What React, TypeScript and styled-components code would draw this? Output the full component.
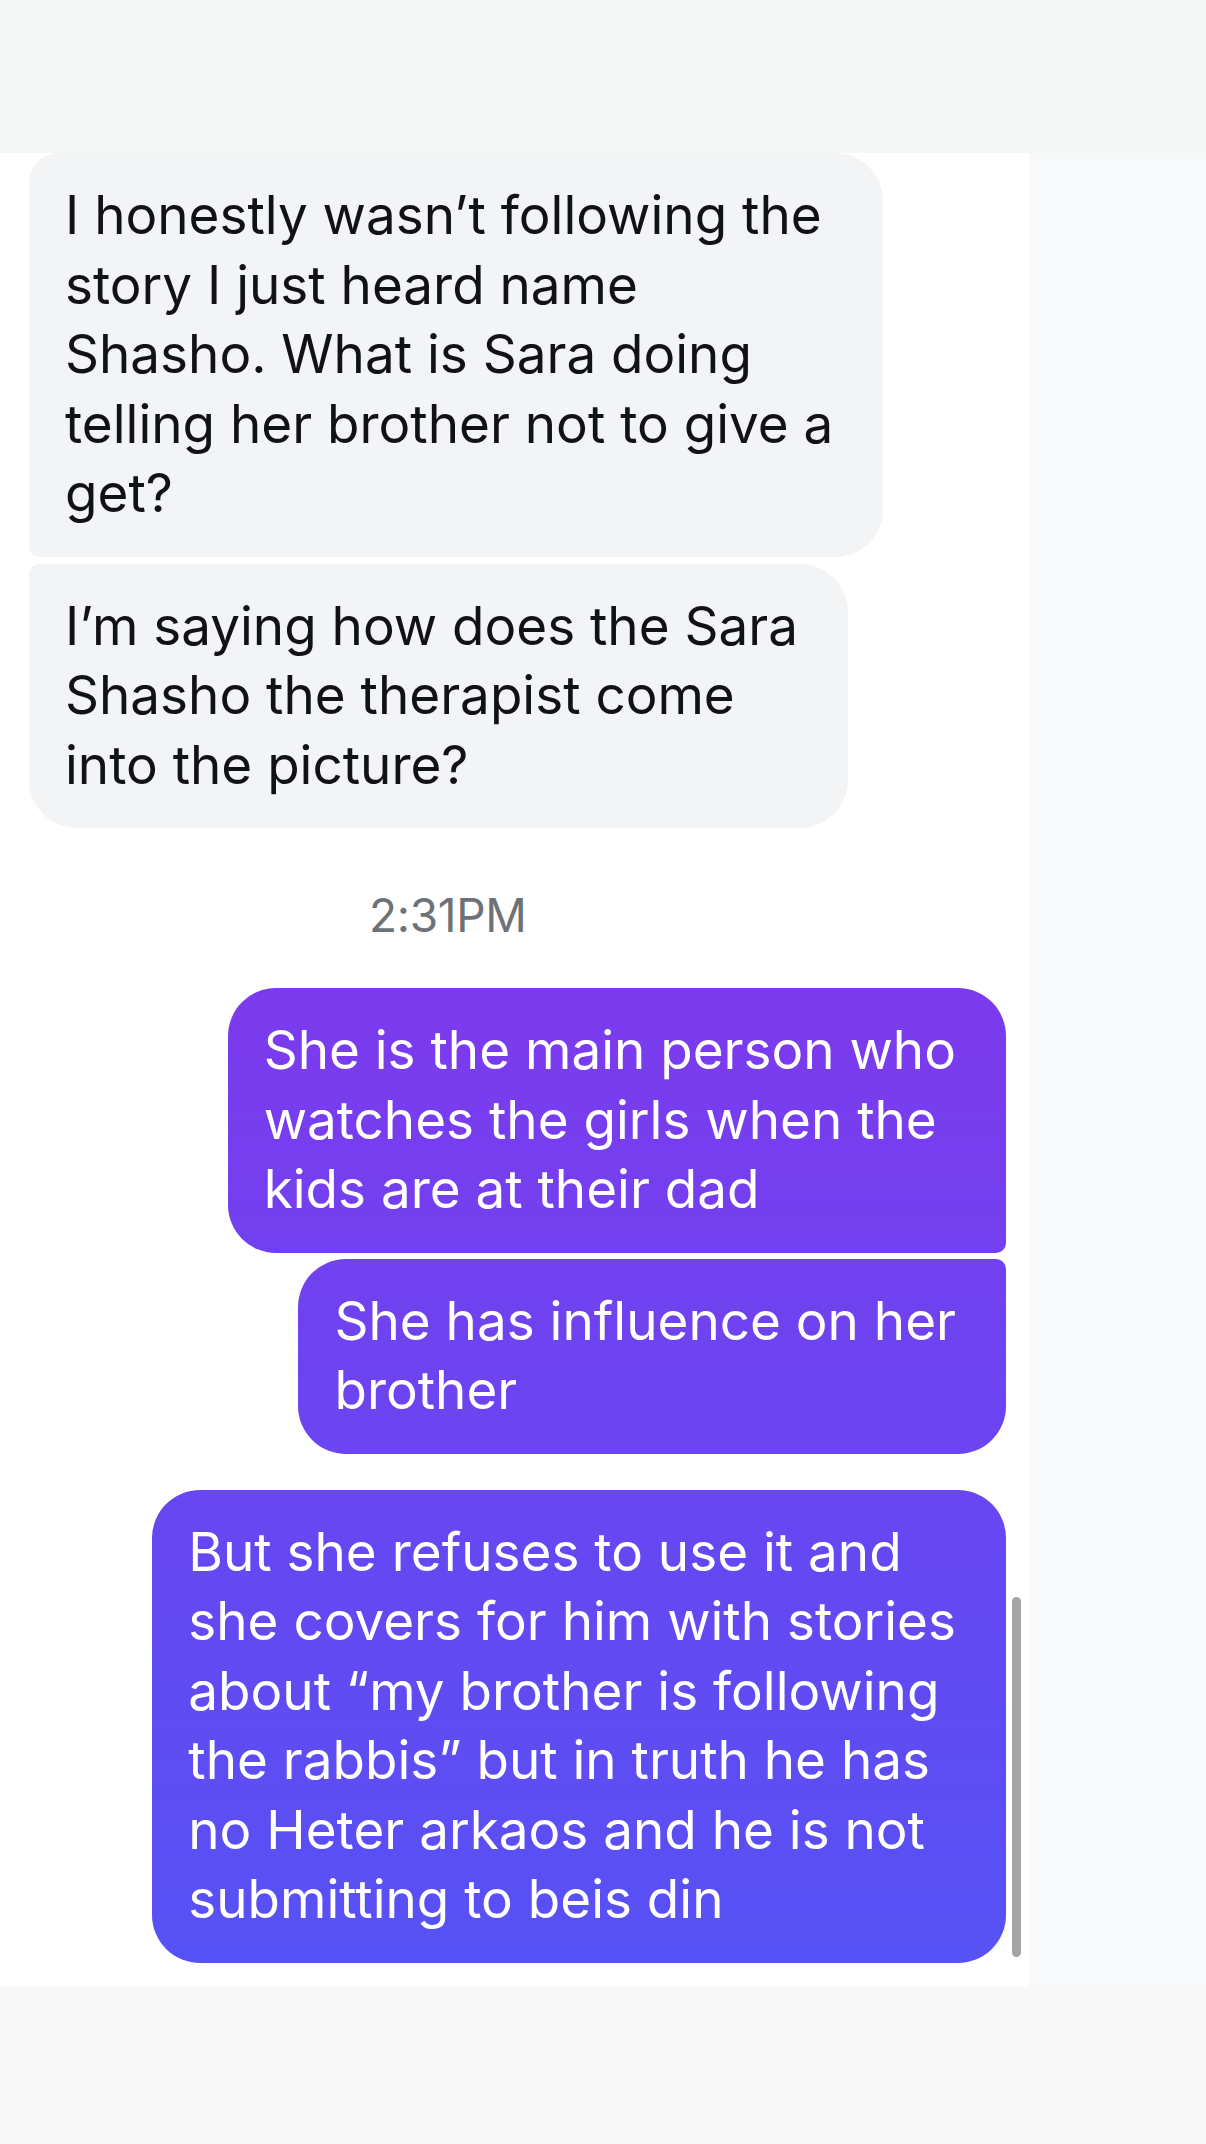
import { createGlobalStyle, styled, css } from "styled-components";

const GlobalStyle = createGlobalStyle`
  html, body {
    margin: 0;
    padding: 0;
  }
  body {
    background: #f7f8f8;
    font-family: Inter, "Liberation Sans", Arial, sans-serif;
    -webkit-font-smoothing: antialiased;
  }
`;

type Pos = "first" | "last" | "single";

const radius = (pos: Pos, mine: boolean) => {
  const big = "48px";
  const small = "10px";
  if (pos === "single") return big;
  // corners: top-left top-right bottom-right bottom-left
  if (mine) {
    return pos === "first"
      ? `${big} ${big} ${small} ${big}`
      : `${big} ${small} ${big} ${big}`;
  }
  return pos === "first"
    ? `30px ${big} ${big} ${small}`
    : `${small} ${big} ${big} ${big}`;
};

const Screen = styled.div`
  min-height: 2144px;
  display: flex;
  flex-direction: column;
`;

const TopBar = styled.div`
  height: 153px;
  background: #f5f6f6;
`;

const Middle = styled.div`
  display: flex;
`;

const Thread = styled.div`
  position: relative;
  width: 1029px;
  box-sizing: border-box;
  background: #ffffff;
  padding: 0 23px 24px 29px;
  display: flex;
  flex-direction: column;
`;

const SidePane = styled.div`
  flex: 1;
  background: #f8f9fa;
`;

const BottomPane = styled.div`
  flex: 1;
  background: #f8f8f8;
`;

const Group = styled.div<{ $mine?: boolean; $space?: number }>`
  display: flex;
  flex-direction: column;
  align-items: ${(p) => (p.$mine ? "flex-end" : "flex-start")};
  gap: ${(p) => (p.$mine ? 6 : 7)}px;
  margin-top: ${(p) => p.$space ?? 0}px;
`;

const Bubble = styled.div<{ $mine?: boolean; $pos: Pos; $from?: string; $to?: string }>`
  box-sizing: border-box;
  padding: 28px 50px 28px 36px;
  font-size: 53px;
  line-height: 69.5px;
  white-space: nowrap;
  border-radius: ${(p) => radius(p.$pos, !!p.$mine)};
  ${(p) =>
    p.$mine
      ? css`
          color: #ffffff;
          background: linear-gradient(180deg, ${p.$from}, ${p.$to});
        `
      : css`
          color: #111214;
          background: #f3f4f6;
        `}
`;

const Line = styled.span`
  display: block;
`;

const Stamp = styled.div`
  margin: 64px 0 50px;
  padding-left: 340px;
  font-size: 46px;
  line-height: 46px;
  color: #6d7278;
  letter-spacing: -0.3px;
`;

const ScrollThumb = styled.div`
  position: absolute;
  right: 8px;
  top: 1444px;
  width: 9px;
  height: 360px;
  border-radius: 5px;
  background: #a5a5a5;
`;

type Msg = { lines: string[]; pos: Pos; from?: string; to?: string };

const received: Msg[] = [
  {
    pos: "first",
    lines: [
      "I honestly wasn\u2019t following the",
      "story I just heard name",
      "Shasho. What is Sara doing",
      "telling her brother not to give a",
      "get?",
    ],
  },
  {
    pos: "last",
    lines: [
      "I\u2019m saying how does the Sara",
      "Shasho the therapist come",
      "into the picture?",
    ],
  },
];

const sentFirst: Msg[] = [
  {
    pos: "first",
    from: "rgb(124,58,237)",
    to: "rgb(114,65,239)",
    lines: ["She is the main person who", "watches the girls when the", "kids are at their dad"],
  },
  {
    pos: "last",
    from: "rgb(113,65,239)",
    to: "rgb(106,69,241)",
    lines: ["She has influence on her", "brother"],
  },
];

const sentSecond: Msg = {
  pos: "single",
  from: "rgb(104,70,241)",
  to: "rgb(86,82,245)",
  lines: [
    "But she refuses to use it and",
    "she covers for him with stories",
    "about \u201cmy brother is following",
    "the rabbis\u201d but in truth he has",
    "no Heter arkaos and he is not",
    "submitting to beis din",
  ],
};

const MessageBubble = ({ msg, mine }: { msg: Msg; mine?: boolean }) => (
  <Bubble $mine={mine} $pos={msg.pos} $from={msg.from} $to={msg.to}>
    {msg.lines.map((l, i) => (
      <Line key={i}>{l}</Line>
    ))}
  </Bubble>
);

export default function App() {
  return (
    <Screen>
      <GlobalStyle />
      <TopBar />
      <Middle>
        <Thread>
          <Group>
            {received.map((m, i) => (
              <MessageBubble key={i} msg={m} />
            ))}
          </Group>
          <Stamp>2:31PM</Stamp>
          <Group $mine>
            {sentFirst.map((m, i) => (
              <MessageBubble key={i} msg={m} mine />
            ))}
          </Group>
          <Group $mine $space={36}>
            <MessageBubble msg={sentSecond} mine />
          </Group>
          <ScrollThumb />
        </Thread>
        <SidePane />
      </Middle>
      <BottomPane />
    </Screen>
  );
}
